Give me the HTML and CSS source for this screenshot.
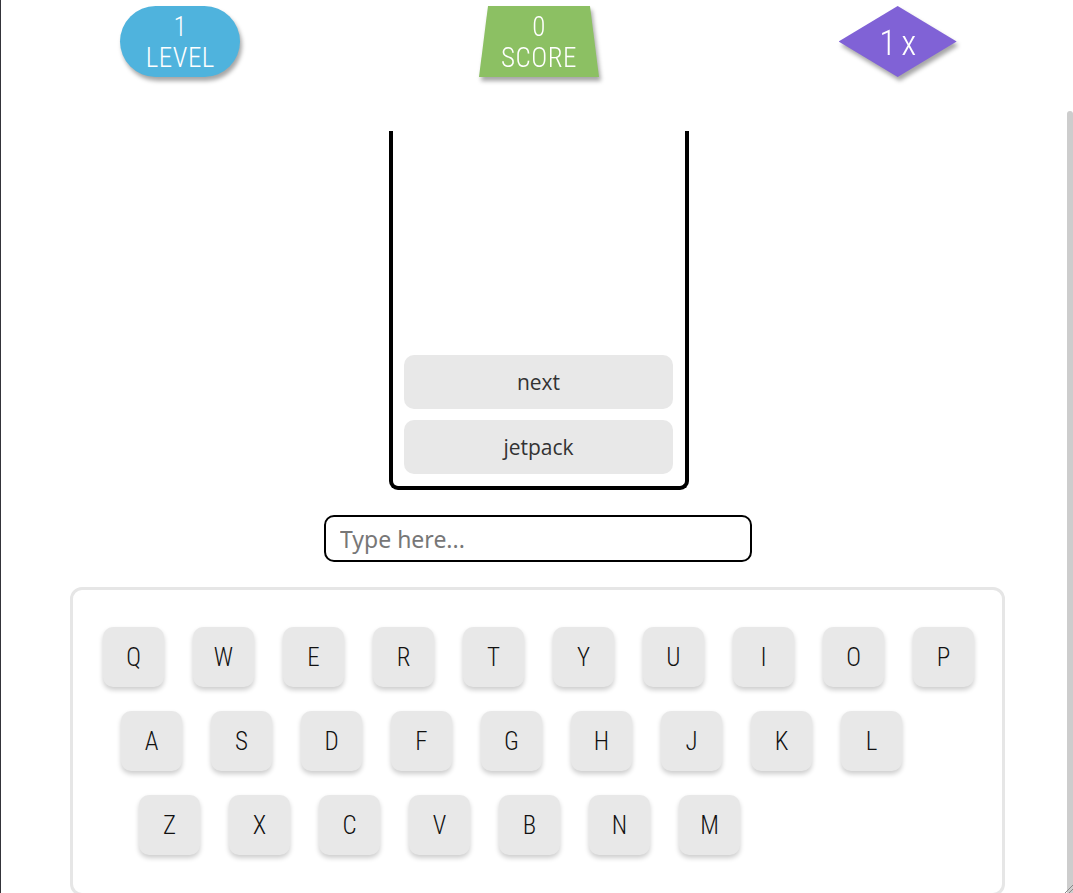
FILE: index.html
```html
<!DOCTYPE html>
<html lang="en">
<head>
<meta charset="utf-8">
<title>Typing Game</title>
<link rel="stylesheet" href="styles.css">
</head>
<body>
<div class="app">
  <header class="stats">
    <div class="stat-cell">
      <div class="badge level"><span>1</span><span>LEVEL</span></div>
    </div>
    <div class="stat-cell">
      <div class="shadow-wrap"><div class="badge score"><span>0</span><span>SCORE</span></div></div>
    </div>
    <div class="stat-cell">
      <div class="shadow-wrap"><div class="badge multi"><span>1x</span></div></div>
    </div>
  </header>

  <section class="glass">
    <button class="glass-btn">next</button>
    <button class="glass-btn">jetpack</button>
  </section>

  <div class="input-row">
    <input class="type-input" type="text" placeholder="Type here..." autofocus>
  </div>

  <section class="keyboard">
    <div class="key-row">
      <div class="key">Q</div><div class="key">W</div><div class="key">E</div><div class="key">R</div><div class="key">T</div><div class="key">Y</div><div class="key">U</div><div class="key">I</div><div class="key">O</div><div class="key">P</div>
    </div>
    <div class="key-row row-2">
      <div class="key">A</div><div class="key">S</div><div class="key">D</div><div class="key">F</div><div class="key">G</div><div class="key">H</div><div class="key">J</div><div class="key">K</div><div class="key">L</div>
    </div>
    <div class="key-row row-3">
      <div class="key">Z</div><div class="key">X</div><div class="key">C</div><div class="key">V</div><div class="key">B</div><div class="key">N</div><div class="key">M</div>
    </div>
  </section>
</div>
<div class="scroll-thumb"></div>
<svg class="grip" width="10" height="10" viewBox="0 0 10 10"><path d="M10 2 L2 10 M10 6 L6 10" stroke="#888" stroke-width="1"/></svg>
</body>
</html>
```
FILE: styles.css
```css
html, body {
  margin: 0;
  padding: 0;
  height: 893px;
  overflow: hidden;
  background: #fff;
}
.app {
  width: 1076px;
  border-left: 1px solid #34343a;
  min-height: 893px;
  box-sizing: content-box;
  font-family: "Roboto", "DejaVu Sans", sans-serif;
}
.stats {
  display: grid;
  grid-template-columns: repeat(3, 1fr);
  padding-top: 6px;
  height: 71px;
}
.stat-cell {
  display: flex;
  justify-content: center;
}
.shadow-wrap {
  filter: drop-shadow(2px 4px 2px rgba(0, 0, 0, 0.35));
}
.badge {
  width: 120px;
  height: 71px;
  box-sizing: border-box;
  padding-top: 3px;
  display: flex;
  flex-direction: column;
  align-items: center;
  justify-content: center;
  color: #fff;
  font-weight: 300;
  font-stretch: 75%;
  font-size: 27px;
  line-height: 31px;
  letter-spacing: 0.5px;
}
.level {
  background: #4fb3dd;
  border-radius: 36px;
  box-shadow: 2px 4px 4px rgba(0, 0, 0, 0.35);
}
.score {
  background: #8cc063;
  clip-path: polygon(7.5% 0, 92.5% 0, 100% 100%, 0 100%);
}
.multi {
  width: 118px;
  background: #8062d6;
  clip-path: polygon(50% 0, 100% 50%, 50% 100%, 0 50%);
  font-size: 35px;
  line-height: 40px;
  letter-spacing: 5px;
  padding: 4px 0 0 5px;
}
.glass {
  width: 300px;
  height: 359px;
  box-sizing: border-box;
  margin: 54px auto 0;
  border: 4px solid #000;
  border-top: none;
  border-radius: 0 0 9px 9px;
  display: flex;
  flex-direction: column;
  justify-content: flex-end;
  gap: 11px;
  padding: 0 12px 12px 11px;
}
.glass-btn {
  height: 54px;
  border: none;
  border-radius: 10px;
  background: #e8e8e8;
  font-family: "Open Sans", "Noto Sans", sans-serif;
  font-size: 21px;
  color: #333;
  padding: 0;
}
.input-row {
  display: flex;
  justify-content: center;
  margin-top: 25px;
  padding-right: 2px;
}
.type-input {
  width: 428px;
  height: 47px;
  box-sizing: border-box;
  border: 2px solid #000;
  border-radius: 10px;
  padding: 0 14px;
  font-family: "Noto Sans", "Open Sans", sans-serif;
  font-size: 23px;
  color: #222;
  outline: none;
}
.type-input::placeholder {
  color: #777;
}
.keyboard {
  width: 935px;
  height: 309px;
  box-sizing: border-box;
  margin: 25px 0 0 69px;
  border: 3px solid #e6e6e6;
  border-radius: 12px;
  padding: 37px 0 0 30px;
  display: flex;
  flex-direction: column;
  gap: 24px;
}
.key-row {
  display: flex;
  gap: 29px;
}
.row-2 { margin-left: 18px; }
.row-3 { margin-left: 36px; }
.key {
  width: 61px;
  height: 60px;
  border-radius: 10px;
  background: #e8e8e8;
  box-shadow: 0 3px 5px rgba(0, 0, 0, 0.2);
  display: flex;
  align-items: center;
  justify-content: center;
  font-family: "Roboto", "DejaVu Sans", sans-serif;
  font-weight: 300;
  font-stretch: 75%;
  font-size: 25px;
  color: #111;
}
.scroll-thumb {
  position: fixed;
  left: 1067px;
  top: 111px;
  width: 6px;
  height: 782px;
  background: #cdcdcd;
  border-radius: 3px 3px 0 0;
}
.grip {
  position: fixed;
  left: 1063px;
  top: 883px;
}
```
